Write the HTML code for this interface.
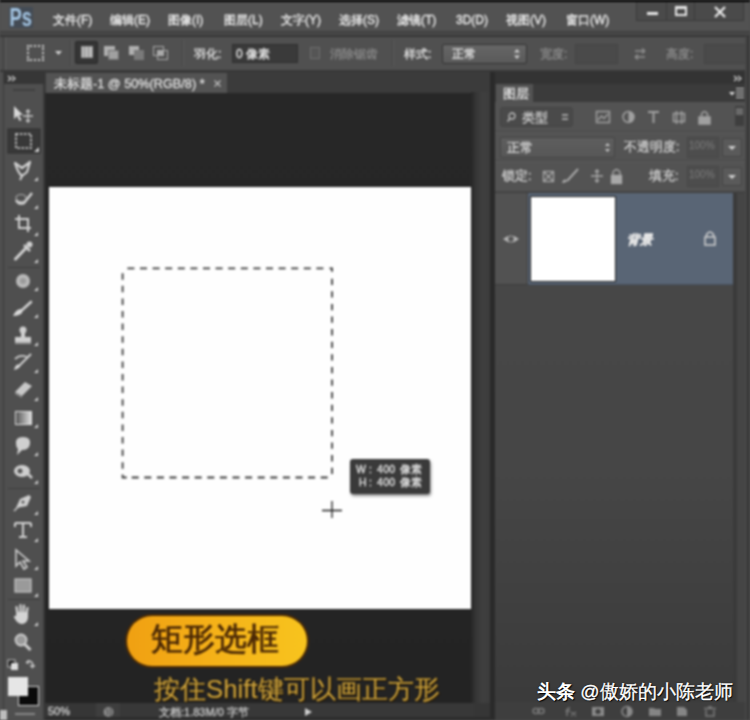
<!DOCTYPE html>
<html><head><meta charset="utf-8">
<style>
*{margin:0;padding:0;box-sizing:border-box}
html,body{width:750px;height:720px;overflow:hidden;background:#505050;font-family:"Liberation Sans",sans-serif;color:#d6d6d6}
div{position:absolute}
.mi{top:10px;font-size:12px;color:#eaeaea;white-space:nowrap;-webkit-text-stroke:0.35px #eaeaea}
.ot{font-size:12px;color:#e0e0e0;white-space:nowrap;-webkit-text-stroke:0.3px currentColor}
.ic{position:absolute}
</style></head><body><div id="root" style="left:0;top:0;width:750px;height:720px;background:#505050;overflow:hidden;filter:blur(0.8px)">
<!-- top black line -->
<div style="left:0;top:0;width:750px;height:1.5px;background:#000"></div>
<!-- left border -->
<div style="left:3px;top:35px;width:1px;height:685px;background:#3a3a3a"></div>
<!-- menubar -->
<div id="menubar" style="left:0;top:2px;width:750px;height:32px;background:#525252">
  <div style="left:9px;top:5px;width:24px;height:21px;background:#434b55"></div>
  <svg class="ic" style="left:0;top:-2px" width="40" height="34"><text x="9.5" y="26" font-family="Liberation Sans" font-weight="bold" font-size="25" fill="#a3c4e2" textLength="22.5" lengthAdjust="spacingAndGlyphs">Ps</text></svg>
  <div class="mi" style="left:53px">文件(F)</div>
  <div class="mi" style="left:110px">编辑(E)</div>
  <div class="mi" style="left:168px">图像(I)</div>
  <div class="mi" style="left:224px">图层(L)</div>
  <div class="mi" style="left:281px">文字(Y)</div>
  <div class="mi" style="left:339px">选择(S)</div>
  <div class="mi" style="left:397px">滤镜(T)</div>
  <div class="mi" style="left:456px;top:11px">3D(D)</div>
  <div class="mi" style="left:506px">视图(V)</div>
  <div class="mi" style="left:566px">窗口(W)</div>
  <!-- window buttons -->
  <div style="left:636px;top:0;width:108px;height:19px;background:#4a4a4a;border:1px solid #3a3a3a;border-top:none"></div>
  <div style="left:666px;top:0;width:1px;height:19px;background:#3a3a3a"></div>
  <div style="left:694px;top:0;width:1px;height:19px;background:#3a3a3a"></div>
  <div style="left:647px;top:10px;width:11px;height:3px;background:#e6e6e6"></div>
  <div style="left:675px;top:4px;width:12px;height:10px;border:2px solid #e6e6e6;border-top-width:3px"></div>
  <svg class="ic" style="left:713px;top:4px" width="14" height="12" viewBox="0 0 14 12"><path d="M2 1 L12 11 M12 1 L2 11" stroke="#e6e6e6" stroke-width="2.4"/></svg>
</div>
<div style="left:0;top:31px;width:750px;height:2px;background:#404040"></div><div style="left:0;top:33px;width:750px;height:2px;background:#4b4b4b"></div>
<!-- options bar -->
<div id="opt" style="left:4px;top:36px;width:743px;height:34px;background:#505050">
  <div style="left:1px;top:0;width:1px;height:34px;background:#5c5c5c"></div>
  <!-- marquee icon -->
  <div style="left:23px;top:9px;width:17px;height:16px;border:2px dotted #cfcfcf"></div>
  <svg class="ic" style="left:50px;top:14px" width="9" height="6"><path d="M1 1 L8 1 L4.5 5 Z" fill="#d0d0d0"/></svg>
  <div style="left:66px;top:4px;width:1px;height:26px;background:#444"></div>
  <div style="left:67px;top:4px;width:1px;height:26px;background:#5e5e5e"></div>
  <!-- selection mode buttons -->
  <div style="left:71px;top:5px;width:23px;height:23px;background:#353535;border:1px solid #2a2a2a;border-radius:2px"></div>
  <div style="left:77px;top:10px;width:12px;height:12px;background:#bdbdbd;border:1px solid #999"></div>
  <div style="left:80px;top:11px;width:1px;height:10px;background:#8a8a8a"></div>
  <div style="left:84px;top:11px;width:1px;height:10px;background:#8a8a8a"></div>
  <div style="left:100px;top:10px;width:11px;height:10px;background:#b0b0b0"></div>
  <div style="left:104px;top:14px;width:11px;height:10px;background:#a0a0a0;border:1px solid #6e6e6e"></div>
  <div style="left:125px;top:10px;width:10px;height:9px;background:#b0b0b0"></div>
  <div style="left:130px;top:14px;width:10px;height:10px;background:#7a7a7a"></div>
  <div style="left:149px;top:10px;width:11px;height:10px;border:1.5px solid #aaa"></div>
  <div style="left:153px;top:14px;width:11px;height:10px;border:1.5px solid #aaa"></div>
  <div style="left:153px;top:14px;width:7px;height:6px;background:#aaa"></div>
  <div style="left:178px;top:4px;width:1px;height:26px;background:#444"></div>
  <div style="left:179px;top:4px;width:1px;height:26px;background:#5e5e5e"></div>
  <div class="ot" style="left:190px;top:10px">羽化:</div>
  <div style="left:228px;top:8px;width:66px;height:19px;background:#3a3a3a;border:1px solid #2e2e2e"></div>
  <div class="ot" style="left:232px;top:10px;color:#e8e8e8">0 像素</div>
  <div style="left:306px;top:11px;width:10px;height:12px;border:1px solid #6e6e6e;background:#555"></div>
  <div class="ot" style="left:326px;top:10px;color:#8a8a8a">消除锯齿</div>
  <div style="left:388px;top:4px;width:1px;height:26px;background:#444"></div>
  <div style="left:389px;top:4px;width:1px;height:26px;background:#5e5e5e"></div>
  <div class="ot" style="left:400px;top:10px">样式:</div>
  <div style="left:438px;top:8px;width:85px;height:20px;background:linear-gradient(#666,#5a5a5a);border:1px solid #333;border-radius:2px"></div>
  <div class="ot" style="left:448px;top:10px;color:#e8e8e8">正常</div>
  <svg class="ic" style="left:509px;top:12px" width="8" height="12"><path d="M1 4.5 L4 1 L7 4.5 Z M1 7.5 L4 11 L7 7.5 Z" fill="#cfcfcf"/></svg>
  <div class="ot" style="left:536px;top:10px;color:#8c8c8c">宽度:</div>
  <div style="left:571px;top:8px;width:43px;height:20px;background:#4a4a4a;border:1px solid #444"></div>
  <svg class="ic" style="left:628px;top:10px" width="16" height="16"><path d="M3 11 L13 11 M3 11 L6 8.5 M3 11 L6 13.5 M13 5 L3 5 M13 5 L10 2.5 M13 5 L10 7.5" stroke="#8e8e8e" stroke-width="1.5" fill="none"/></svg>
  <div class="ot" style="left:662px;top:10px;color:#8c8c8c">高度:</div>
  <div style="left:700px;top:8px;width:42px;height:20px;background:#4a4a4a;border:1px solid #444"></div>
</div>
<div style="left:0;top:35px;width:750px;height:2px;background:#353535"></div>
<div style="left:0;top:70px;width:750px;height:2px;background:#373737"></div>

<!-- document area -->
<div style="left:44px;top:72px;width:448px;height:21px;background:#3b3b3b"></div>
<div style="left:46px;top:73px;width:181px;height:20px;background:#535353"></div>
<div style="left:44px;top:93px;width:429px;height:610px;background:linear-gradient(180deg,#272727 0,#262626 60%,#232323 100%)"></div>
<div style="left:471px;top:92px;width:19px;height:611px;background:linear-gradient(90deg,#262626 0,#353535 25%,#3f3f3f 60%,#3c3c3c 100%)"></div>
<div style="left:49px;top:187px;width:422px;height:422px;background:#fefefe"></div>
<div style="left:44px;top:703px;width:448px;height:17px;background:#363636"></div>
<div style="left:490px;top:72px;width:5px;height:648px;background:#2a2a2a"></div>


<!-- doc tab text -->
<div class="ot" style="left:54px;top:76px;font-size:12.7px;color:#e0e0e0">未标题-1 @ 50%(RGB/8) *</div>
<svg class="ic" style="left:213px;top:79px" width="9" height="9"><path d="M1.5 1.5 L7.5 7.5 M7.5 1.5 L1.5 7.5" stroke="#bdbdbd" stroke-width="1.3"/></svg>
<!-- marquee -->
<svg class="ic" style="left:0;top:0" width="750" height="720">
  <path d="M127.4 268.4 L134.4 268.4 M140.0 268.4 L147.0 268.4 M152.6 268.4 L159.6 268.4 M165.2 268.4 L172.2 268.4 M177.8 268.4 L184.8 268.4 M190.4 268.4 L197.4 268.4 M203.0 268.4 L210.0 268.4 M215.6 268.4 L222.6 268.4 M228.2 268.4 L235.2 268.4 M240.8 268.4 L247.8 268.4 M253.4 268.4 L260.4 268.4 M266.0 268.4 L273.0 268.4 M278.6 268.4 L285.6 268.4 M291.2 268.4 L298.2 268.4 M303.8 268.4 L310.8 268.4 M316.4 268.4 L323.4 268.4 M329.5 268.4 L333.0 268.4 L332.1 268.4 L332.1 271.7 M332.1 278.7 L332.1 285.0 M332.1 291.3 L332.1 297.6 M332.1 303.9 L332.1 310.2 M332.1 316.5 L332.1 322.8 M332.1 329.1 L332.1 335.4 M332.1 341.7 L332.1 348.0 M332.1 354.3 L332.1 360.6 M332.1 366.9 L332.1 373.2 M332.1 379.5 L332.1 385.8 M332.1 392.1 L332.1 398.4 M332.1 404.7 L332.1 411.0 M332.1 417.3 L332.1 423.6 M332.1 429.9 L332.1 436.2 M332.1 442.5 L332.1 448.8 M332.1 455.1 L332.1 461.4 M332.1 467.7 L332.1 474.0 M131.7 477.5 L138.7 477.5 M144.3 477.5 L151.3 477.5 M156.9 477.5 L163.9 477.5 M169.5 477.5 L176.5 477.5 M182.1 477.5 L189.1 477.5 M194.7 477.5 L201.7 477.5 M207.3 477.5 L214.3 477.5 M219.9 477.5 L226.9 477.5 M232.5 477.5 L239.5 477.5 M245.1 477.5 L252.1 477.5 M257.7 477.5 L264.7 477.5 M270.3 477.5 L277.3 477.5 M282.9 477.5 L289.9 477.5 M295.5 477.5 L302.5 477.5 M308.1 477.5 L315.1 477.5 M320.7 477.5 L327.7 477.5 M122.6 474.5 L122.6 477.5 L126.7 477.5 M122.6 273.2 L122.6 279.7 M122.6 285.8 L122.6 292.3 M122.6 298.4 L122.6 304.9 M122.6 311.0 L122.6 317.5 M122.6 323.6 L122.6 330.1 M122.6 336.2 L122.6 342.7 M122.6 348.8 L122.6 355.3 M122.6 361.4 L122.6 367.9 M122.6 374.0 L122.6 380.5 M122.6 386.6 L122.6 393.1 M122.6 399.2 L122.6 405.7 M122.6 411.8 L122.6 418.3 M122.6 424.4 L122.6 430.9 M122.6 437.0 L122.6 443.5 M122.6 449.6 L122.6 456.1 M122.6 462.2 L122.6 468.7" stroke="#3a3a3a" stroke-width="1.8" fill="none"/>
  <path d="M332 501 L332 518 M322 510.5 L342 510.5" stroke="#1a1a1a" stroke-width="1.3"/>
</svg>
<!-- tooltip -->
<div style="left:350px;top:459px;width:80px;height:35px;background:#3a3a3a;border-radius:3px;box-shadow:1px 2px 3px rgba(0,0,0,0.45)"></div>
<div class="ot" style="left:356px;top:463px;font-size:10.5px;line-height:13px;color:#e6e6e6">W<br>&nbsp;H</div>
<div class="ot" style="left:369px;top:463px;font-size:10.5px;line-height:13px;color:#e6e6e6">:<br>:</div>
<div class="ot" style="left:377px;top:463px;font-size:10.5px;line-height:13px;color:#e6e6e6;letter-spacing:0.3px">400<br>400</div>
<div class="ot" style="left:400px;top:463px;font-size:11px;line-height:13px;color:#e6e6e6">像素<br>像素</div>
<!-- banner -->
<div style="left:125px;top:614px;width:184px;height:54px;border-radius:27px;background:#4a2a06"></div><div style="left:127px;top:616px;width:180px;height:50px;border-radius:25px;background:linear-gradient(90deg,#f0a012 0%,#f5b018 45%,#f8c41e 100%)"></div>
<div style="left:151px;top:619px;font-size:32px;line-height:40px;color:#4a2806;white-space:nowrap;-webkit-text-stroke:0.7px #4a2806">矩形选框</div>
<div style="left:154px;top:674px;font-size:25.8px;line-height:30px;color:#c9a03c;white-space:nowrap;-webkit-text-stroke:0.15px #c9a03c;text-shadow:0 0 1.5px #2a1a00,1px 1px 1px #2a1a00">按住Shift键可以画正方形</div>
<!-- status bar -->
<div class="ot" style="left:48px;top:705px;font-size:11px;color:#d0d0d0">50%</div>
<div style="left:96px;top:703px;width:24px;height:15px;background:#3e3e3e"></div>
<div style="left:120px;top:703px;width:354px;height:15px;background:#383838"></div>
<div style="left:44px;top:717px;width:448px;height:3px;background:#2c2c2c"></div>
<svg class="ic" style="left:102px;top:706px" width="13" height="12"><circle cx="6.5" cy="6" r="5" fill="#8a8a8a"/><path d="M4 3 Q7 5 5 9 M8 2 Q10 6 8 10" stroke="#555" stroke-width="1.2" fill="none"/></svg>
<div class="ot" style="left:159px;top:705px;font-size:11px;color:#c8c8c8">文档:1.83M/0 字节</div>
<svg class="ic" style="left:304px;top:707px" width="9" height="10"><path d="M1 1 L8 5 L1 9 Z" fill="#cfcfcf"/></svg>


<!-- toolbar -->
<div style="left:4px;top:72px;width:41px;height:12px;background:#363636"></div>
<div style="left:4px;top:84px;width:39px;height:636px;background:#4f4f4f"></div>
<div style="left:43px;top:84px;width:2px;height:636px;background:#3a3a3a"></div>


<!-- toolbar content -->
<svg class="ic" style="left:0;top:0" width="50" height="720" viewBox="0 0 50 720">
  <g fill="#d0d0d0" stroke="none">
    <path d="M8 76 L11 78.5 L8 81 M12 76 L15 78.5 L12 81" stroke="#d0d0d0" stroke-width="1.3" fill="none"/>
  </g>
  <rect x="13" y="89" width="22" height="2" fill="#3f3f3f"/>
  <!-- move -->
  <path d="M14 106 L14 119 L17 116 L19.5 121 L21.5 120 L19 115 L23 115 Z" fill="#d8d8d8"/>
  <path d="M28 110 L28 122 M23 116 L33 116 M26 112 L28 110 L30 112 M26 120 L28 122 L30 120" stroke="#c8c8c8" stroke-width="1.3" fill="none"/>
  <!-- marquee selected -->
  <rect x="8" y="129" width="32" height="24" fill="#383838" stroke="#2e2e2e" stroke-width="1"/>
  <rect x="16" y="134" width="15" height="14" fill="none" stroke="#d8d8d8" stroke-width="1.6" stroke-dasharray="2.5 1.5"/>
  <path d="M34 152 L39 152 L39 147 Z" fill="#d0d0d0"/>
  <!-- lasso -->
  <path d="M15 163 L22 168 L30 162 L27 172 L22 176 Q18 173 15 163 Z" fill="none" stroke="#d0d0d0" stroke-width="2.2" stroke-linejoin="round"/>
  <path d="M22 176 L20 180" stroke="#d0d0d0" stroke-width="2"/>
  <path d="M34 181 L38 181 L38 177 Z" fill="#cfcfcf"/>
  <!-- quick select -->
  <path d="M16 200 Q19 205 24 203 L32 193" stroke="#d0d0d0" stroke-width="2.5" fill="none"/>
  <ellipse cx="21" cy="198" rx="5" ry="3.5" fill="none" stroke="#aaa" stroke-width="1.2"/>
  <path d="M34 209 L38 209 L38 205 Z" fill="#cfcfcf"/>
  <!-- crop -->
  <path d="M19 215 L19 228 L31 228 M15 219 L28 219 L28 232" stroke="#d0d0d0" stroke-width="2" fill="none"/>
  <path d="M34 236 L38 236 L38 232 Z" fill="#cfcfcf"/>
  <!-- eyedropper -->
  <path d="M15.5 259 L26 248" stroke="#d0d0d0" stroke-width="3" stroke-linecap="round"/>
  <path d="M24 245 L30 251" stroke="#d0d0d0" stroke-width="2.5"/>
  <circle cx="29.5" cy="244.5" r="3" fill="#d0d0d0"/>
  <path d="M34 263 L38 263 L38 259 Z" fill="#cfcfcf"/>
  <rect x="8" y="267" width="32" height="1" fill="#3e3e3e"/>
  <!-- healing -->
  <circle cx="23" cy="281" r="7" fill="#b8b8b8"/>
  <circle cx="23" cy="281" r="3" fill="#9a9a9a"/>
  <path d="M34 291 L38 291 L38 287 Z" fill="#cfcfcf"/>
  <!-- brush -->
  <path d="M21 311 L31 302" stroke="#d0d0d0" stroke-width="2.6" stroke-linecap="round" fill="none"/>
  <path d="M13 316 Q16 309 21 309 Q23 311 22 313 Q19 316 13 316 Z" fill="#d8d8d8"/>
  <path d="M34 318 L38 318 L38 314 Z" fill="#cfcfcf"/>
  <!-- stamp -->
  <circle cx="23" cy="330" r="3.5" fill="#d0d0d0"/>
  <rect x="21" y="332" width="4" height="6" fill="#d0d0d0"/>
  <rect x="15" y="337" width="16" height="5" fill="#d0d0d0"/>
  <rect x="15" y="342" width="16" height="2" fill="#9a9a9a"/>
  <path d="M34 346 L38 346 L38 342 Z" fill="#cfcfcf"/>
  <!-- history brush -->
  <path d="M15 359 Q20 354 27 357" stroke="#c8c8c8" stroke-width="1.8" fill="none"/>
  <path d="M19 366 L31 354" stroke="#d0d0d0" stroke-width="2" fill="none"/>
  <path d="M14 370 Q16 363 20 365 Q21 368 14 370 Z" fill="#d8d8d8"/>
  <path d="M34 373 L38 373 L38 369 Z" fill="#cfcfcf"/>
  <!-- eraser -->
  <path d="M15 392 L25 382 L32 386 L22 396 Z" fill="#c8c8c8"/>
  <path d="M15 392 L22 396 L22 398 L15 394 Z" fill="#8a8a8a"/>
  <path d="M34 401 L38 401 L38 397 Z" fill="#cfcfcf"/>
  <!-- gradient -->
  <rect x="15" y="411" width="17" height="14" fill="#e0e0e0"/>
  <rect x="16" y="412" width="15" height="12" fill="url(#gr)"/>
  <defs><linearGradient id="gr"><stop offset="0" stop-color="#555"/><stop offset="1" stop-color="#ddd"/></linearGradient></defs>
  <path d="M34 428 L38 428 L38 424 Z" fill="#cfcfcf"/>
  <!-- blur (drop) -->
  <path d="M16 444 Q15 437 23 437 Q31 437 30 444 Q29 450 22 450 L17 455 L18 449 Q16 447 16 444 Z" fill="#cfcfcf"/>
  <path d="M34 456 L38 456 L38 452 Z" fill="#cfcfcf"/>
  <!-- dodge -->
  <ellipse cx="22" cy="471" rx="8" ry="6" fill="#cfcfcf"/>
  <circle cx="20" cy="471" r="2.5" fill="#555"/>
  <path d="M28 474 L32 478" stroke="#cfcfcf" stroke-width="2.5"/>
  <path d="M34 484 L38 484 L38 480 Z" fill="#cfcfcf"/>
  <rect x="8" y="488" width="32" height="1" fill="#3e3e3e"/>
  <!-- pen -->
  <path d="M16 508 L20 499 L29 495 L31 497 L27 506 Z" fill="#cfcfcf"/>
  <circle cx="23" cy="502" r="1.5" fill="#555"/>
  <path d="M14 511 L19 506" stroke="#cfcfcf" stroke-width="1.5"/>
  <path d="M34 515 L38 515 L38 511 Z" fill="#cfcfcf"/>
  <!-- type -->
  <path d="M15 523 L31 523 M23 523 L23 537 M19 537 L27 537 M15 523 L15 527 M31 523 L31 527" stroke="#d0d0d0" stroke-width="2" fill="none"/>
  <path d="M34 542 L38 542 L38 538 Z" fill="#cfcfcf"/>
  <!-- path select -->
  <path d="M16 550 L16 566 L20 562 L24 569 L27 567 L23 561 L29 561 Z" fill="#4a4a4a" stroke="#cfcfcf" stroke-width="1.6"/>
  <path d="M34 570 L38 570 L38 566 Z" fill="#cfcfcf"/>
  <!-- rectangle -->
  <rect x="15" y="579" width="16" height="13" fill="#9a9a9a" stroke="#c8c8c8" stroke-width="1.2"/>
  <path d="M34 597 L38 597 L38 593 Z" fill="#cfcfcf"/>
  <rect x="8" y="599" width="32" height="1" fill="#3e3e3e"/>
  <!-- hand -->
  <g stroke="#d4d4d4" stroke-linecap="round" fill="none">
    <path d="M17.5 614 L16.5 607" stroke-width="2.2"/>
    <path d="M20.5 612 L20.5 605" stroke-width="2.2"/>
    <path d="M23.5 612 L24 605.5" stroke-width="2.2"/>
    <path d="M26.5 613 L27.5 608" stroke-width="2.2"/>
    <path d="M15 617 L19 621" stroke-width="2.4"/>
  </g>
  <path d="M17 612 L28 612 L28 618 Q27 624 21 624 Q17 623 15 619 Z" fill="#d4d4d4"/>
  <path d="M34 626 L38 626 L38 622 Z" fill="#cfcfcf"/>
  <!-- zoom -->
  <circle cx="21" cy="640" r="5.5" fill="#9a9a9a" stroke="#cfcfcf" stroke-width="1.8"/>
  <path d="M25 644.5 L30.5 650" stroke="#cfcfcf" stroke-width="3"/>
  <!-- small default colors / swap -->
  <rect x="8" y="660" width="7" height="7" fill="#111" stroke="#ccc" stroke-width="1"/>
  <rect x="11" y="663" width="7" height="7" fill="#ddd"/>
  <path d="M28 661 Q33 661 33 666 M26 663 L28 661 L28 664 M33 668 L31 666 L35 666" stroke="#cfcfcf" stroke-width="1.3" fill="none"/>
  <!-- fg/bg -->
  <rect x="18.5" y="686.5" width="20" height="19" fill="#0a0a0a" stroke="#d8d8d8" stroke-width="1"/>
  <rect x="8" y="677" width="20" height="19" fill="#e6e6e6"/>
  <rect x="0" y="710" width="7" height="10" fill="#bdbdbd"/>
  <rect x="15" y="713" width="20" height="2" fill="#888"/>
</svg>

<!-- right panel -->
<div style="left:495px;top:72px;width:250px;height:12px;background:#333"></div>
<div style="left:495px;top:84px;width:250px;height:18px;background:#3b3b3b"></div>
<div style="left:496px;top:84px;width:37px;height:18px;background:#535353"></div>
<div style="left:495px;top:102px;width:250px;height:91px;background:#535353"></div>
<div style="left:495px;top:193px;width:238px;height:509px;background:linear-gradient(180deg,#484848 0,#464646 55%,#3b3b3b 100%)"></div>
<div style="left:733px;top:193px;width:4px;height:509px;background:#3a3a3a"></div><div style="left:737px;top:193px;width:8px;height:509px;background:#454545"></div>
<div style="left:495px;top:702px;width:250px;height:18px;background:#3e3e3e"></div>
<div style="left:745px;top:36px;width:2px;height:684px;background:#474747"></div>
<div style="left:747px;top:36px;width:2px;height:684px;background:#353535"></div>
<div style="left:749px;top:36px;width:1px;height:684px;background:#474747"></div>

<!-- panel content -->
<svg class="ic" style="left:0;top:0" width="750" height="720">
  <path d="M734 76 L737 78.5 L734 81 M738 76 L741 78.5 L738 81" stroke="#d0d0d0" stroke-width="1.3" fill="none"/>
  <path d="M729 92 L735 92 L732 95.5 Z" fill="#e0e0e0"/>
  <path d="M736 88.5 L744 88.5 M736 91.5 L744 91.5 M736 94.5 L744 94.5 M736 97.5 L744 97.5" stroke="#d8d8d8" stroke-width="1.1"/>
</svg>
<div class="ot" style="left:503px;top:86px;font-size:12.5px;color:#e8e8e8">图层</div>
<!-- filter row -->
<div style="left:500px;top:107px;width:73px;height:20px;background:#4a4a4a;border:1px solid #444;border-radius:3px"></div>
<svg class="ic" style="left:506px;top:111px" width="12" height="12"><circle cx="6" cy="5" r="3" stroke="#bdbdbd" stroke-width="1.3" fill="none"/><path d="M4 7.5 L1.5 10.5" stroke="#bdbdbd" stroke-width="1.5"/></svg>
<div class="ot" style="left:522px;top:109px;font-size:13px;color:#d0d0d0">类型</div>
<svg class="ic" style="left:561px;top:112px" width="8" height="10"><path d="M1 3 L7 3 M1 7 L7 7" stroke="#bdbdbd" stroke-width="1.3"/></svg>
<svg class="ic" style="left:0;top:0" width="750" height="720">
  <g stroke="#a0a0a0" fill="none" stroke-width="1.5">
    <rect x="596.5" y="111.5" width="13" height="11"/>
    <path d="M598 120 L601.5 116 L604 118.5 L608 114"/>
    <circle cx="628.5" cy="117" r="5.5"/>
    <path d="M648 112 L659 112 M653.5 112 L653.5 123" stroke-width="2"/>
    <rect x="673.5" y="113.5" width="11" height="8"/>
    <path d="M676.5 111 L676.5 124 M681.5 111 L681.5 124"/>
    <rect x="699" y="117" width="11" height="7" fill="#a0a0a0"/>
    <path d="M701.5 117 L701.5 114 Q704.5 109 707.5 114 L707.5 117"/>
  </g>
  <path d="M628.5 111.5 A5.5 5.5 0 0 1 628.5 122.5 Z" fill="#a0a0a0"/>
  <rect x="735" y="106" width="9" height="20" fill="#3e3e3e"/>
  <rect x="736" y="108" width="7" height="7" fill="#6a6a6a"/>
</svg>
<div style="left:495px;top:131px;width:250px;height:1px;background:#474747"></div>
<div style="left:495px;top:132px;width:250px;height:1px;background:#5c5c5c"></div>
<!-- blend row -->
<div style="left:500px;top:137px;width:115px;height:21px;background:linear-gradient(#5e5e5e,#575757);border:1px solid #444;border-radius:2px"></div>
<div class="ot" style="left:507px;top:139px;font-size:13px;color:#dcdcdc">正常</div>
<svg class="ic" style="left:604px;top:142px" width="7" height="11"><path d="M1 4 L3.5 1 L6 4 Z M1 7 L3.5 10 L6 7 Z" fill="#c8c8c8"/></svg>
<div class="ot" style="left:624px;top:139px;font-size:12.5px;color:#cfcfcf">不透明度:</div>
<div style="left:687px;top:137px;width:32px;height:21px;background:#4d4d4d;border:1px solid #474747"></div>
<div class="ot" style="left:689px;top:140px;color:#707070;font-size:10px">100%</div>
<div style="left:722px;top:138px;width:20px;height:19px;background:#5a5a5a;border:1px solid #444;border-radius:2px"></div>
<svg class="ic" style="left:727px;top:145px" width="10" height="6"><path d="M1 1 L9 1 L5 5 Z" fill="#cfcfcf"/></svg>
<div style="left:495px;top:160px;width:250px;height:1px;background:#474747"></div>
<div style="left:495px;top:161px;width:250px;height:1px;background:#5c5c5c"></div>
<!-- lock row -->
<div class="ot" style="left:502px;top:168px;font-size:12.5px;color:#cfcfcf">锁定:</div>
<svg class="ic" style="left:0;top:0" width="750" height="720">
  <g stroke="#a8a8a8" fill="none" stroke-width="1.3">
    <rect x="543.5" y="171.5" width="10" height="10"/>
    <path d="M544 172 L553 181 M553 172 L544 181"/>
    <path d="M567 181 L578 169" stroke-width="2"/>
    <path d="M591 176 L603 176 M597 170 L597 182 M595 172 L597 170 L599 172 M595 180 L597 182 L599 180"/>
    <rect x="611.5" y="175.5" width="10" height="8" fill="#a8a8a8"/>
    <path d="M613 175 L613 172 Q616.5 167 620 172 L620 175"/>
  </g>
  <path d="M562 183 Q563 178 567 180 Q567 183 562 183 Z" fill="#a8a8a8"/>
</svg>
<div class="ot" style="left:649px;top:168px;font-size:12.5px;color:#cfcfcf">填充:</div>
<div style="left:687px;top:166px;width:32px;height:21px;background:#4d4d4d;border:1px solid #474747"></div>
<div class="ot" style="left:689px;top:169px;color:#707070;font-size:10px">100%</div>
<div style="left:722px;top:167px;width:20px;height:19px;background:#5a5a5a;border:1px solid #444;border-radius:2px"></div>
<svg class="ic" style="left:727px;top:174px" width="10" height="6"><path d="M1 1 L9 1 L5 5 Z" fill="#cfcfcf"/></svg>
<div style="left:495px;top:191px;width:250px;height:1px;background:#474747"></div>
<div style="left:495px;top:192px;width:250px;height:1px;background:#3e3e3e"></div>
<!-- layer row -->
<div style="left:495px;top:193px;width:33px;height:92px;background:#525252;border-right:1px solid #404040;border-bottom:1px solid #3d3d3d"></div>
<svg class="ic" style="left:502px;top:233px" width="18" height="12"><path d="M1 6 Q9 -1 17 6 Q9 13 1 6 Z" fill="#b5b5b5"/><circle cx="9" cy="6" r="2.8" fill="#555"/></svg>
<div style="left:528px;top:193px;width:205px;height:92px;background:#596575;border-bottom:1px solid #46505e"></div>
<div style="left:530px;top:196px;width:86px;height:86px;background:#1f1f1f"></div>
<div style="left:531px;top:197px;width:84px;height:84px;background:#fff"></div>
<div class="ot" style="left:627px;top:232px;font-size:12.5px;font-style:italic;font-weight:bold;color:#e8e8e8">背景</div>
<svg class="ic" style="left:702px;top:230px" width="16" height="16"><path d="M4.5 7 L4.5 4.5 Q8 -0.5 11.5 4.5 L11.5 7" stroke="#d0d0d0" stroke-width="1.5" fill="none"/><rect x="3" y="7" width="10" height="8" fill="none" stroke="#d0d0d0" stroke-width="1.5"/></svg>
<!-- panel bottom icons -->
<svg class="ic" style="left:0;top:0" width="750" height="720">
  <g fill="none" stroke="#7a7a7a" stroke-width="1.5">
    <rect x="533" y="708.5" width="6" height="5" rx="2.5"/>
    <rect x="538" y="708.5" width="6" height="5" rx="2.5"/>
    <path d="M570 708 Q567 708 567 711 L567 716 M565.5 711 L570 711 M571 712 L576 716 M576 712 L571 716"/>
  </g>
  <rect x="592" y="707" width="12" height="9" fill="#8a8a8a"/>
  <circle cx="598" cy="711.5" r="2.6" fill="#3e3e3e"/>
  <circle cx="627" cy="711.5" r="5" fill="none" stroke="#8a8a8a" stroke-width="1.6"/>
  <path d="M627 706.5 A5 5 0 0 1 627 716.5 Z" fill="#8a8a8a"/>
  <path d="M649 708 L654 708 L655 709 L661 709 L661 716 L649 716 Z" fill="#858585"/>
  <path d="M677 707 L684 707 L687 710 L687 716 L677 716 Z" fill="#858585"/>
  <path d="M704 708.5 L716 708.5 M706 710 L706 716 L714 716 L714 710 M708 707 L712 707" stroke="#7a7a7a" stroke-width="1.5" fill="none"/>
</svg>

</div>
<!-- watermark -->
<div style="left:537px;top:680px;font-size:19px;line-height:24px;font-weight:bold;color:#fff;white-space:nowrap;text-shadow:1px 1px 1px rgba(0,0,0,0.9), 0 0 2px rgba(0,0,0,0.6)">头条 <span style="font-weight:normal;-webkit-text-stroke:0.3px #fff">@傲娇的小陈老师</span></div>
</body></html>
